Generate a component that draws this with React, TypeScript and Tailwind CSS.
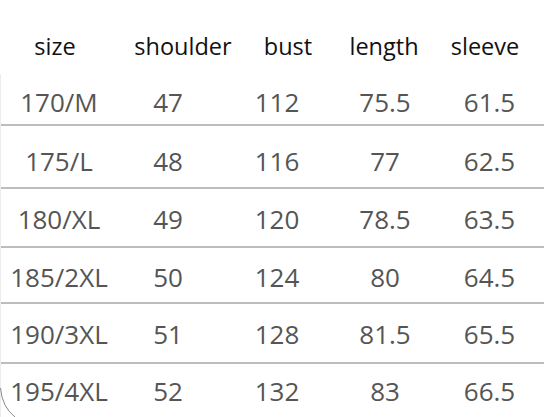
import React from 'react';

type Row = {
  size: string;
  shoulder: string;
  bust: string;
  length: string;
  sleeve: string;
  cls: string;
};

const rows: Row[] = [
  { size: '170/M', shoulder: '47', bust: '112', length: '75.5', sleeve: '61.5', cls: 'h-[52px] pt-[6px] border-b-2' },
  { size: '175/L', shoulder: '48', bust: '116', length: '77', sleeve: '62.5', cls: 'h-[63px] pt-[9px] border-b-2' },
  { size: '180/XL', shoulder: '49', bust: '120', length: '78.5', sleeve: '63.5', cls: 'h-[59px] pt-[3px] border-b-2' },
  { size: '185/2XL', shoulder: '50', bust: '124', length: '80', sleeve: '64.5', cls: 'h-[56px] pt-[4px] border-b-2' },
  { size: '190/3XL', shoulder: '51', bust: '128', length: '81.5', sleeve: '65.5', cls: 'h-[60px] pt-[2px] border-b-2' },
  { size: '195/4XL', shoulder: '52', bust: '132', length: '83', sleeve: '66.5', cls: 'h-[60px] pb-[6px]' },
];

export default function App() {
  return (
    <div className="relative w-[544px] h-[417px] overflow-hidden bg-white font-['Open_Sans',sans-serif]">
      {/* header */}
      <div className="grid grid-cols-[110px_146px_64px_128px_74px] h-[74px] pt-[20px] items-center text-[23.5px] text-[#111]">
        <span className="text-center">size</span>
        <span className="text-center">shoulder</span>
        <span className="text-center">bust</span>
        <span className="text-center">length</span>
        <span className="text-center">sleeve</span>
      </div>

      {/* body */}
      <div className="border-l border-[#ececec] text-[26px] font-[370] text-[#555]">
        {rows.map((r) => (
          <div
            key={r.size}
            className={`grid grid-cols-[116px_102px_116px_100px_1fr] items-center border-[#bdbdbd] ${r.cls}`}
          >
            <span className="text-center">{r.size}</span>
            <span className="text-center">{r.shoulder}</span>
            <span className="text-center">{r.bust}</span>
            <span className="text-center">{r.length}</span>
            <span className="text-center">{r.sleeve}</span>
          </div>
        ))}
      </div>

      {/* rounded corner of the frame below */}
      <svg className="absolute left-0 bottom-0" width="24" height="32" viewBox="0 0 24 32">
        <path d="M0.5 3 Q2 22 15 32" fill="none" stroke="#8a8a8a" strokeWidth="1" />
      </svg>
    </div>
  );
}
